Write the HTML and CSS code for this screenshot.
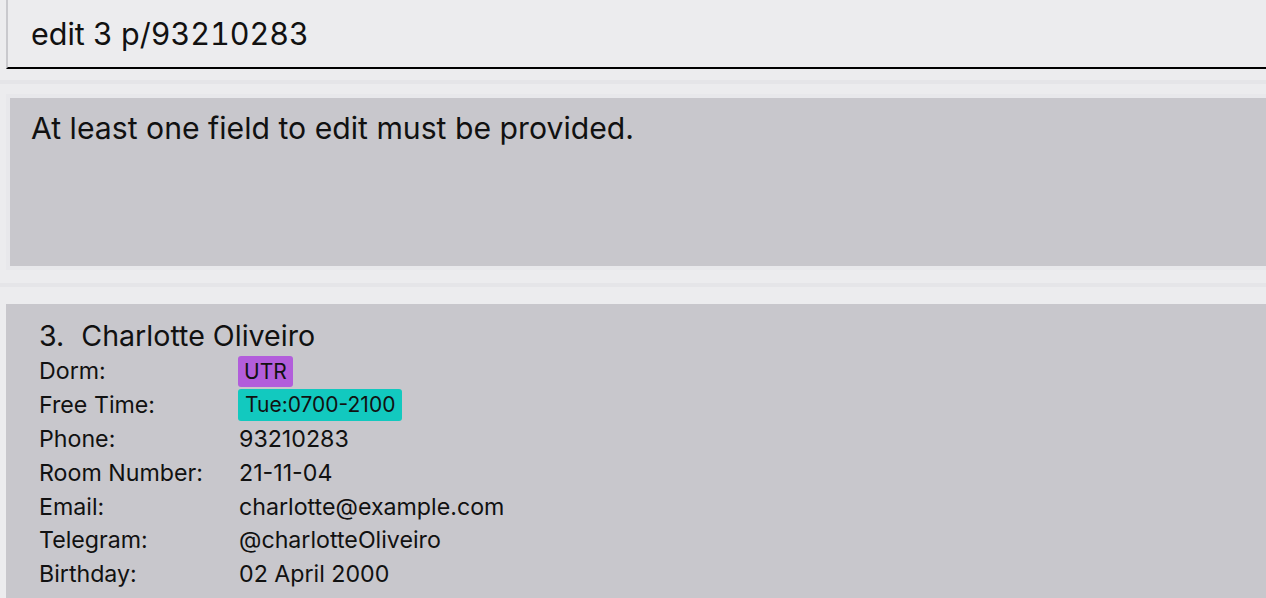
FILE: index.html
```html
<!DOCTYPE html>
<html>
<head>
<meta charset="utf-8">
<link rel="stylesheet" href="styles.css">
</head>
<body>
<div class="app">
  <div class="command-area">
    <div class="command">edit 3 p/93210283</div>
  </div>
  <div class="divider"></div>
  <div class="result-area">
    <div class="result-frame">
      <div class="result">At least one field to edit must be provided.</div>
    </div>
  </div>
  <div class="divider second"></div>
  <div class="list">
    <div class="card">
      <div class="name"><span class="index">3.</span>Charlotte Oliveiro</div>
      <div class="row"><span class="label">Dorm:</span><span class="tag dorm">UTR</span></div>
      <div class="row"><span class="label">Free Time:</span><span class="tag free">Tue:0700-2100</span></div>
      <div class="row"><span class="label">Phone:</span><span class="value">93210283</span></div>
      <div class="row"><span class="label">Room Number:</span><span class="value">21-11-04</span></div>
      <div class="row"><span class="label">Email:</span><span class="value">charlotte@example.com</span></div>
      <div class="row"><span class="label">Telegram:</span><span class="value">@charlotteOliveiro</span></div>
      <div class="row"><span class="label">Birthday:</span><span class="value">02 April 2000</span></div>
    </div>
  </div>
</div>
</body>
</html>
```

FILE: styles.css
```css
html, body {
  margin: 0;
  padding: 0;
  background: #ececee;
  font-family: Inter, "Noto Sans", sans-serif;
  color: #111;
  overflow: hidden;
}
.app {
  width: 1266px;
  height: 598px;
  overflow: hidden;
}
.command-area {
  padding-left: 6px;
}
.command {
  box-sizing: border-box;
  border-left: 2px solid #c9c9cd;
  border-bottom: 2px solid #000;
  height: 69px;
  padding-left: 23px;
  font-size: 30.5px;
  line-height: 68px;
  font-variant-numeric: tabular-nums;
}
.divider {
  height: 4px;
  margin-top: 11px;
  background: #e5e5e8;
}
.divider.second {
  margin-top: 13px;
}
.result-area {
  padding: 10px 0 0 6px;
}
.result-frame {
  padding: 4px 0 4px 4px;
  background: #e8e8eb;
}
.result {
  background: #c8c7cc;
  height: 168px;
  box-sizing: border-box;
  padding: 10px 0 0 21px;
  font-size: 30.2px;
  line-height: 40px;
}
.list {
  padding: 17px 0 0 6px;
}
.card {
  background: #c8c7cc;
  padding: 14px 0 8px 33px;
}
.name {
  font-size: 28.6px;
  line-height: 36px;
}
.index {
  margin-right: 17px;
}
.row {
  display: flex;
  align-items: center;
  height: 33.8px;
  font-size: 23.2px;
  padding-top: 1px;
  box-sizing: border-box;
}
.label {
  width: 200px;
  flex: none;
}
.tag {
  border-radius: 3px;
  padding: 0 7px;
  line-height: 31px;
  height: 31px;
  font-size: 21px;
  margin-left: -1px;
}
.dorm {
  background: #b25ddb;
  padding: 0 6px;
}
.free {
  background: #12c9bf;
  height: 32px;
  line-height: 32px;
}
```
